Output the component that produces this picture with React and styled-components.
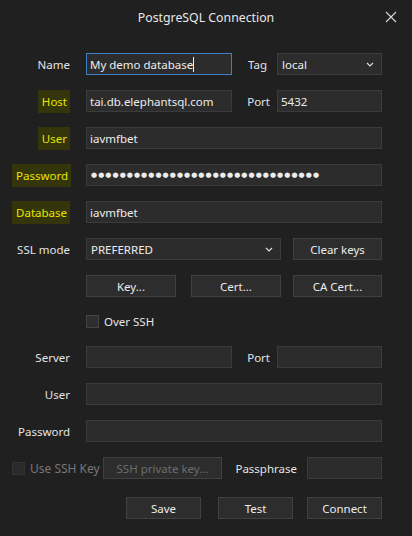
import React from 'react'
import styled, { createGlobalStyle } from 'styled-components'

const Global = createGlobalStyle`
  html, body {
    margin: 0;
    background: #202020;
  }
  body {
    font-family: 'Noto Sans', 'Open Sans', sans-serif;
    font-size: 11.5px;
    color: #e4e4e4;
  }
`

const Dialog = styled.div`
  width: 412px;
  height: 536px;
  background: #202020;
  box-sizing: border-box;
`

const TitleBar = styled.div`
  height: 35px;
  display: flex;
  align-items: center;
  justify-content: center;
  position: relative;
  font-size: 12.3px;
  color: #e8e8e8;
`

const Close = styled.div`
  position: absolute;
  right: 14px;
  top: 10px;
  width: 14px;
  height: 14px;
  display: flex;
  align-items: center;
  justify-content: center;
`

const Form = styled.div`
  display: flex;
  flex-direction: column;
  gap: 15px;
  padding: 18px 30px 0 12px;
`

const Row = styled.div`
  display: flex;
  align-items: center;
  height: ${p => p.h || 22}px;
`

const Label = styled.div`
  width: 58px;
  margin-right: 16px;
  text-align: right;
  flex-shrink: 0;
  white-space: nowrap;
`

const Mark = styled.span`
  background: #35350b;
  color: #e6e600;
  padding: 4px 3px 4px 4px;
`

const SideLabel = styled.div`
  width: ${p => p.w}px;
  padding-right: ${p => p.pr || 8}px;
  box-sizing: border-box;
  text-align: right;
  flex-shrink: 0;
  white-space: nowrap;
  color: #e4e4e4;
`

const Input = styled.input`
  font: inherit;
  color: #ececec;
  background: #2c2c2c;
  border: 1px solid #3b3b3b;
  box-sizing: border-box;
  height: 22px;
  width: ${p => (p.w ? p.w + 'px' : 'auto')};
  flex: ${p => (p.w ? '0 0 auto' : '1')};
  padding: 0 3px;
  outline: none;
  min-width: 0;
`

const Dots = styled(Input)`
  font-family: 'DejaVu Sans', sans-serif;
  font-size: 7px;
  letter-spacing: 1.05px;
  padding-left: 4px;
`

const FocusField = styled.div`
  width: 146px;
  height: 22px;
  box-sizing: border-box;
  background: #2c2c2c;
  border: 1px solid #3f7fc4;
  padding: 0 3px;
  display: flex;
  align-items: center;
  color: #ececec;
  white-space: nowrap;
`

const Caret = styled.span`
  display: inline-block;
  width: 1px;
  height: 15px;
  background: #f0f0f0;
`

const Select = styled.div`
  height: 22px;
  box-sizing: border-box;
  width: ${p => (p.w ? p.w + 'px' : 'auto')};
  flex: ${p => (p.w ? '0 0 auto' : '1')};
  background: #2c2c2c;
  border: 1px solid #3b3b3b;
  display: flex;
  align-items: center;
  justify-content: space-between;
  padding: 0 7px 0 4px;
  color: #ececec;
`

const Button = styled.div`
  height: 22px;
  box-sizing: border-box;
  width: ${p => p.w}px;
  margin-left: ${p => p.ml || 0}px;
  flex-shrink: 0;
  background: #2d2d2d;
  border: 1px solid #404040;
  display: flex;
  align-items: center;
  justify-content: center;
  color: ${p => (p.disabled ? '#6c6c6c' : '#ececec')};
  white-space: nowrap;
`

const Check = styled.span`
  width: 13px;
  height: 13px;
  box-sizing: border-box;
  background: ${p => (p.disabled ? '#2a2a2a' : '#2e2e2e')};
  border: 1px solid ${p => (p.disabled ? '#333' : '#444')};
  margin-right: 5px;
  flex-shrink: 0;
`

const CheckLabel = styled.label`
  display: flex;
  align-items: center;
  color: ${p => (p.disabled ? '#777' : '#e4e4e4')};
  width: ${p => (p.w ? p.w + 'px' : 'auto')};
  flex-shrink: 0;
  white-space: nowrap;
  font-size: ${p => (p.disabled ? '12px' : 'inherit')};
`

const Buttons = styled.div`
  display: flex;
  justify-content: flex-end;
  margin-top: 3px;
`

const Chevron = () => (
  <svg width="8" height="5" viewBox="0 0 8 5">
    <path d="M1 1l3 3l3-3" fill="none" stroke="#dcdcdc" strokeWidth="1.2" />
  </svg>
)

const App = () => {
  return (
    <Dialog>
      <Global />
      <TitleBar>
        PostgreSQL Connection
        <Close>
          <svg width="12" height="12" viewBox="0 0 12 12">
            <path d="M1 1l10 10M11 1L1 11" stroke="#d8d8d8" strokeWidth="1.1" />
          </svg>
        </Close>
      </TitleBar>
      <Form>
        <Row>
          <Label>Name</Label>
          <FocusField>
            My demo database<Caret />
          </FocusField>
          <SideLabel w={45} pr={10}>Tag</SideLabel>
          <Select>
            <span>local</span>
            <Chevron />
          </Select>
        </Row>
        <Row>
          <Label>
            <Mark>Host</Mark>
          </Label>
          <Input w={146} readOnly value="tai.db.elephantsql.com" />
          <SideLabel w={45} pr={7}>Port</SideLabel>
          <Input readOnly value="5432" />
        </Row>
        <Row>
          <Label>
            <Mark>User</Mark>
          </Label>
          <Input readOnly value="iavmfbet" />
        </Row>
        <Row>
          <Label>
            <Mark>Password</Mark>
          </Label>
          <Dots readOnly value={'●'.repeat(32)} />
        </Row>
        <Row>
          <Label>
            <Mark>Database</Mark>
          </Label>
          <Input readOnly value="iavmfbet" />
        </Row>
        <Row>
          <Label>SSL mode</Label>
          <Select>
            <span>PREFERRED</span>
            <Chevron />
          </Select>
          <Button w={89} ml={12}>Clear keys</Button>
        </Row>
        <Row>
          <Label />
          <Button w={90}>Key...</Button>
          <Button w={90} ml={15}>Cert...</Button>
          <Button w={89} ml={12}>CA Cert...</Button>
        </Row>
        <Row h={19}>
          <Label />
          <CheckLabel>
            <Check />
            Over SSH
          </CheckLabel>
        </Row>
        <Row>
          <Label>Server</Label>
          <Input w={146} readOnly value="" />
          <SideLabel w={45} pr={7}>Port</SideLabel>
          <Input readOnly value="" />
        </Row>
        <Row>
          <Label>User</Label>
          <Input readOnly value="" />
        </Row>
        <Row>
          <Label>Password</Label>
          <Input readOnly value="" />
        </Row>
        <Row>
          <CheckLabel disabled w={91}>
            <Check disabled />
            Use SSH Key
          </CheckLabel>
          <Button w={119} disabled>SSH private key...</Button>
          <SideLabel w={85} pr={10}>Passphrase</SideLabel>
          <Input readOnly value="" />
        </Row>
        <Buttons>
          <Button w={75}>Save</Button>
          <Button w={75} ml={17}>Test</Button>
          <Button w={75} ml={14}>Connect</Button>
        </Buttons>
      </Form>
    </Dialog>
  )
}

export default App
